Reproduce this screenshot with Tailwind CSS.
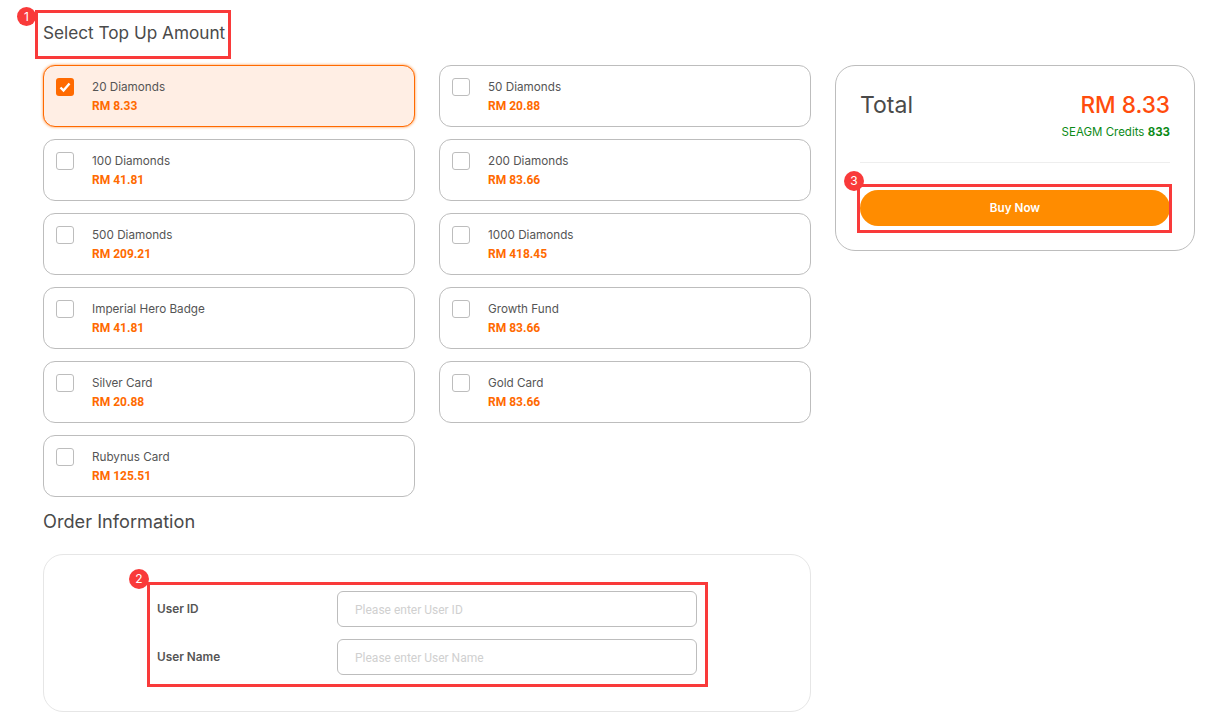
<!DOCTYPE html>
<html lang="en">
<head>
    <meta charset="UTF-8">
    <title>Top Up</title>
    <script src="https://cdn.jsdelivr.net/npm/@tailwindcss/browser@4"></script>
</head>
<body class="bg-white h-[722px] overflow-hidden font-['Inter',sans-serif] text-[#4a4a4a] relative">

<!-- Annotation overlays -->
<div class="absolute left-[35px] top-[10px] w-[196px] h-[49px] border-[3px] border-[#f93a3a]"></div>
<div class="absolute left-[17px] top-[7px] w-[19px] h-[19px] rounded-full bg-[#f93a3a] text-white text-[12px] flex items-center justify-center">1</div>
<div class="absolute left-[147px] top-[582px] w-[561px] h-[105px] border-[3px] border-[#f93a3a]"></div>
<div class="absolute left-[129px] top-[569px] w-[20px] h-[20px] rounded-full bg-[#f93a3a] text-white text-[12px] flex items-center justify-center">2</div>
<div class="absolute left-[857px] top-[184px] w-[315px] h-[49px] border-[3px] border-[#f93a3a]"></div>
<div class="absolute left-[844px] top-[171px] w-[20px] h-[20px] rounded-full bg-[#f93a3a] text-white text-[12px] flex items-center justify-center">3</div>

<div class="flex gap-6 pl-[43px]">
    <div class="w-[768px]">
        <h2 class="h-[65px] pt-[20px] text-[17.2px] leading-[26px]">Select Top Up Amount</h2>

        <div class="grid grid-cols-2 gap-x-6 gap-y-3">
            <!-- Selected item -->
            <div class="h-[62px] rounded-xl border border-[#ff6a00] bg-[#ffeee4] shadow-[0_0_3px_#ff8a33] flex pl-3 pt-[12px]">
                <div class="w-[18px] h-[18px] rounded-[3px] bg-[#ff6a00] flex items-center justify-center">
                    <svg class="w-[14px] h-[14px]" viewBox="0 0 14 14" fill="none" stroke="white" stroke-width="2.4"><path d="M2.5 7.5l3 3 6-7"/></svg>
                </div>
                <div class="ml-[18px]">
                    <p class="text-[11.7px] leading-[18px] text-[#555]">20 Diamonds</p>
                    <p class="mt-px font-['Roboto',sans-serif] text-[12px] leading-[18px] font-bold text-[#ff6a00]">RM 8.33</p>
                </div>
            </div>
            <div class="h-[62px] rounded-xl border border-[#bdbdbd] flex pl-3 pt-[12px]">
                <div class="w-[18px] h-[18px] rounded-[3px] border border-[#bdbdbd]"></div>
                <div class="ml-[18px]">
                    <p class="text-[11.7px] leading-[18px] text-[#555]">50 Diamonds</p>
                    <p class="mt-px font-['Roboto',sans-serif] text-[12px] leading-[18px] font-bold text-[#ff6a00]">RM 20.88</p>
                </div>
            </div>
            <div class="h-[62px] rounded-xl border border-[#bdbdbd] flex pl-3 pt-[12px]">
                <div class="w-[18px] h-[18px] rounded-[3px] border border-[#bdbdbd]"></div>
                <div class="ml-[18px]">
                    <p class="text-[11.7px] leading-[18px] text-[#555]">100 Diamonds</p>
                    <p class="mt-px font-['Roboto',sans-serif] text-[12px] leading-[18px] font-bold text-[#ff6a00]">RM 41.81</p>
                </div>
            </div>
            <div class="h-[62px] rounded-xl border border-[#bdbdbd] flex pl-3 pt-[12px]">
                <div class="w-[18px] h-[18px] rounded-[3px] border border-[#bdbdbd]"></div>
                <div class="ml-[18px]">
                    <p class="text-[11.7px] leading-[18px] text-[#555]">200 Diamonds</p>
                    <p class="mt-px font-['Roboto',sans-serif] text-[12px] leading-[18px] font-bold text-[#ff6a00]">RM 83.66</p>
                </div>
            </div>
            <div class="h-[62px] rounded-xl border border-[#bdbdbd] flex pl-3 pt-[12px]">
                <div class="w-[18px] h-[18px] rounded-[3px] border border-[#bdbdbd]"></div>
                <div class="ml-[18px]">
                    <p class="text-[11.7px] leading-[18px] text-[#555]">500 Diamonds</p>
                    <p class="mt-px font-['Roboto',sans-serif] text-[12px] leading-[18px] font-bold text-[#ff6a00]">RM 209.21</p>
                </div>
            </div>
            <div class="h-[62px] rounded-xl border border-[#bdbdbd] flex pl-3 pt-[12px]">
                <div class="w-[18px] h-[18px] rounded-[3px] border border-[#bdbdbd]"></div>
                <div class="ml-[18px]">
                    <p class="text-[11.7px] leading-[18px] text-[#555]">1000 Diamonds</p>
                    <p class="mt-px font-['Roboto',sans-serif] text-[12px] leading-[18px] font-bold text-[#ff6a00]">RM 418.45</p>
                </div>
            </div>
            <div class="h-[62px] rounded-xl border border-[#bdbdbd] flex pl-3 pt-[12px]">
                <div class="w-[18px] h-[18px] rounded-[3px] border border-[#bdbdbd]"></div>
                <div class="ml-[18px]">
                    <p class="text-[11.7px] leading-[18px] text-[#555]">Imperial Hero Badge</p>
                    <p class="mt-px font-['Roboto',sans-serif] text-[12px] leading-[18px] font-bold text-[#ff6a00]">RM 41.81</p>
                </div>
            </div>
            <div class="h-[62px] rounded-xl border border-[#bdbdbd] flex pl-3 pt-[12px]">
                <div class="w-[18px] h-[18px] rounded-[3px] border border-[#bdbdbd]"></div>
                <div class="ml-[18px]">
                    <p class="text-[11.7px] leading-[18px] text-[#555]">Growth Fund</p>
                    <p class="mt-px font-['Roboto',sans-serif] text-[12px] leading-[18px] font-bold text-[#ff6a00]">RM 83.66</p>
                </div>
            </div>
            <div class="h-[62px] rounded-xl border border-[#bdbdbd] flex pl-3 pt-[12px]">
                <div class="w-[18px] h-[18px] rounded-[3px] border border-[#bdbdbd]"></div>
                <div class="ml-[18px]">
                    <p class="text-[11.7px] leading-[18px] text-[#555]">Silver Card</p>
                    <p class="mt-px font-['Roboto',sans-serif] text-[12px] leading-[18px] font-bold text-[#ff6a00]">RM 20.88</p>
                </div>
            </div>
            <div class="h-[62px] rounded-xl border border-[#bdbdbd] flex pl-3 pt-[12px]">
                <div class="w-[18px] h-[18px] rounded-[3px] border border-[#bdbdbd]"></div>
                <div class="ml-[18px]">
                    <p class="text-[11.7px] leading-[18px] text-[#555]">Gold Card</p>
                    <p class="mt-px font-['Roboto',sans-serif] text-[12px] leading-[18px] font-bold text-[#ff6a00]">RM 83.66</p>
                </div>
            </div>
            <div class="h-[62px] rounded-xl border border-[#bdbdbd] flex pl-3 pt-[12px]">
                <div class="w-[18px] h-[18px] rounded-[3px] border border-[#bdbdbd]"></div>
                <div class="ml-[18px]">
                    <p class="text-[11.7px] leading-[18px] text-[#555]">Rubynus Card</p>
                    <p class="mt-px font-['Roboto',sans-serif] text-[12px] leading-[18px] font-bold text-[#ff6a00]">RM 125.51</p>
                </div>
            </div>
        </div>

        <h2 class="mt-[11px] h-[46px] text-[18.2px] leading-[26px]">Order Information</h2>

        <!-- Order form -->
        <div class="h-[158px] rounded-[20px] border border-[#e6e6e6] pt-[36px] pl-[112px]">
            <div class="flex items-center h-[36px] mb-3">
                <label class="w-[181px] pl-px pt-[2px] text-[11.8px] font-semibold text-[#555]">User ID</label>
                <div class="w-[360px] h-[36px] rounded-md border border-[#bdbdbd] pl-[17px] pt-px flex items-center font-['Roboto',sans-serif] text-[12px] text-[#d0d0d0]">Please enter User ID</div>
            </div>
            <div class="flex items-center h-[36px]">
                <label class="w-[181px] pl-px pt-[2px] text-[11.8px] font-semibold text-[#555]">User Name</label>
                <div class="w-[360px] h-[36px] rounded-md border border-[#bdbdbd] pl-[17px] pt-px flex items-center font-['Roboto',sans-serif] text-[12px] text-[#d0d0d0]">Please enter User Name</div>
            </div>
        </div>
    </div>

    <!-- Total panel -->
    <div class="mt-[65px] w-[360px] h-[186px] rounded-[20px] border border-[#bdbdbd] px-6 pt-[24px]">
        <div class="flex justify-between items-center h-[30px]">
            <span class="text-[23px]">Total</span>
            <span class="text-[22.6px] font-medium text-[#ff4c0c]">RM 8.33</span>
        </div>
        <p class="mt-[3px] text-right text-[11.5px] leading-[18px] text-[#0c8a17]">SEAGM Credits <b>833</b></p>
        <div class="mt-[21px] border-t border-[#eeeeee]"></div>
        <button class="mt-[27px] w-full h-[36px] pt-[2px] rounded-full bg-[#ff8c00] text-white text-[11.7px] font-semibold">Buy Now</button>
    </div>
</div>
</body>
</html>
